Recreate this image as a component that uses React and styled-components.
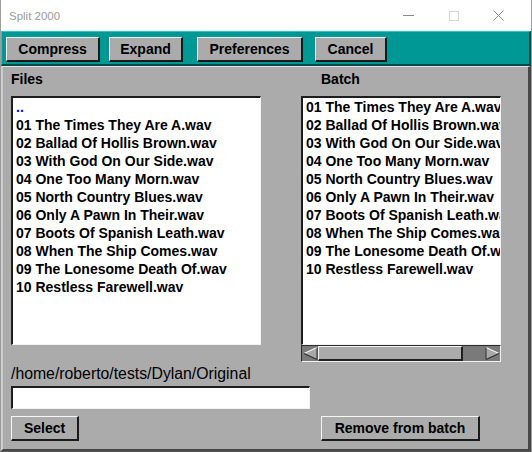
import styled, { createGlobalStyle } from 'styled-components';

const GlobalStyle = createGlobalStyle`
  html, body {
    margin: 0;
    padding: 0;
    background: #fff;
  }
  body {
    font-family: "Liberation Sans", Arial, sans-serif;
  }
`;

const FILES = [
  '01 The Times They Are A.wav',
  '02 Ballad Of Hollis Brown.wav',
  '03 With God On Our Side.wav',
  '04 One Too Many Morn.wav',
  '05 North Country Blues.wav',
  '06 Only A Pawn In Their.wav',
  '07 Boots Of Spanish Leath.wav',
  '08 When The Ship Comes.wav',
  '09 The Lonesome Death Of.wav',
  '10 Restless Farewell.wav',
];

const Window = styled.div`
  width: 532px;
  height: 452px;
  box-sizing: border-box;
  display: flex;
  flex-direction: column;
  background: #fff;
  border-left: 1px solid #9c9c9c;
  border-right: 1px solid #9c9c9c;
  border-bottom: 1px solid #5a5a5a;
`;

const TitleBar = styled.div`
  height: 31px;
  flex-shrink: 0;
  display: flex;
  align-items: center;
  background: #fff;
`;

const Title = styled.span`
  flex: 1;
  padding-left: 8px;
  font-family: "Liberation Sans", Arial, sans-serif;
  font-size: 11.5px;
  color: #9a9a9a;
`;

const Controls = styled.div`
  display: flex;
  padding-right: 10px;
`;

const ControlBox = styled.div`
  width: 45px;
  height: 31px;
  display: flex;
  align-items: center;
  justify-content: center;
`;

const Toolbar = styled.div`
  height: 35px;
  flex-shrink: 0;
  box-sizing: border-box;
  display: flex;
  align-items: flex-start;
  padding: 5px 0 0 4px;
  background: #009894;
  border-style: solid;
  border-width: 1px 2px 2px 1px;
  border-color: #1ecbc8 #004a47 #004a47 #1ecbc8;
`;

const Button = styled.button`
  width: ${p => p.$w}px;
  height: 25px;
  margin-left: ${p => p.$ml || 0}px;
  padding: 0;
  box-sizing: border-box;
  background: #ababab;
  border-style: solid;
  border-width: 1px 2px 2px 1px;
  border-color: #f6f6f6 #1a1a1a #1a1a1a #f6f6f6;
  font-family: "Liberation Sans", Arial, sans-serif;
  font-weight: bold;
  font-size: 14px;
  line-height: 20px;
  color: #000;
  text-align: center;
`;

const Main = styled.div`
  flex: 1;
  box-sizing: border-box;
  background: #ababab;
  border-style: solid;
  border-width: 1px 3px 2px 2px;
  border-color: #e2e2e2 #474747 #474747 #cdcdcd;
  padding: 4px 0 0 8px;
`;

const Panes = styled.div`
  display: grid;
  grid-template-columns: 250px 200px;
  grid-template-rows: 16px auto;
  column-gap: 40px;
  row-gap: 9px;
  align-items: start;
`;

const Label = styled.div`
  padding-left: ${p => p.$indent || 0}px;
  font-weight: bold;
  font-size: 14px;
  line-height: 16px;
  color: #000;
`;

const Sunken = styled.div`
  box-sizing: border-box;
  background: #fff;
  border-style: solid;
  border-width: 2px 1px 1px 2px;
  border-color: #1e1e1e #f2f2f2 #f2f2f2 #1e1e1e;
`;

const List = styled(Sunken)`
  height: 249px;
  padding: 0 0 0 3px;
  overflow: hidden;
`;

const Row = styled.div`
  font-weight: bold;
  font-size: 14px;
  line-height: 18px;
  white-space: nowrap;
  color: ${p => (p.$dir ? '#0000ff' : '#000')};
`;

const BatchBox = styled.div`
  display: flex;
  flex-direction: column;
  height: 266px;
`;

const HScroll = styled.div`
  height: 17px;
  box-sizing: border-box;
  display: flex;
  background: #7a7a7a;
  border-style: solid;
  border-width: 1px;
  border-color: #2a2a2a #f2f2f2 #f2f2f2 #2a2a2a;
  padding-left: 1px;
`;

const Arrow = styled.svg`
  width: 15px;
  height: 15px;
  flex-shrink: 0;
`;

const Thumb = styled.div`
  width: ${p => p.$w}px;
  box-sizing: border-box;
  background: #ababab;
  border-style: solid;
  border-width: 1px 2px 2px 1px;
  border-color: #f4f4f4 #202020 #202020 #f4f4f4;
`;

const Trough = styled.div`
  flex: 1;
`;

const PathLabel = styled.div`
  margin-top: 3px;
  font-size: 15.8px;
  line-height: 18px;
  color: #000;
`;

const PathInput = styled.input`
  display: block;
  width: 299px;
  height: 23px;
  margin: 3px 0 0;
  padding: 0 3px;
  box-sizing: border-box;
  background: #fff;
  border-style: solid;
  border-width: 2px 1px 1px 2px;
  border-color: #1e1e1e #f2f2f2 #f2f2f2 #1e1e1e;
  outline: none;
  font-family: "Liberation Sans", Arial, sans-serif;
  font-size: 14px;
`;

const ButtonRow = styled.div`
  display: grid;
  grid-template-columns: 250px 200px;
  column-gap: 40px;
  margin-top: 7px;
`;

function ScrollArrow({ right }) {
  return (
    <Arrow viewBox="0 0 15 15" style={right ? { transform: 'scaleX(-1)' } : undefined}>
      <polygon points="1,7.5 14,1.5 14,13.5" fill="#a8a8a8" />
      <line x1="1" y1="7.5" x2="14" y2="1.5" stroke="#f4f4f4" strokeWidth="1.2" />
      <line x1="1" y1="7.5" x2="14" y2="13.5" stroke="#303030" strokeWidth="1.2" />
      <line x1="14" y1="1.5" x2="14" y2="13.5" stroke="#303030" strokeWidth="1" />
    </Arrow>
  );
}

export default function App() {
  return (
    <>
      <GlobalStyle />
      <Window>
        <TitleBar>
          <Title>Split 2000</Title>
          <Controls>
            <ControlBox>
              <svg width="11" height="11" viewBox="0 0 11 11">
                <line x1="0" y1="5.5" x2="11" y2="5.5" stroke="#8a8a8a" strokeWidth="1" />
              </svg>
            </ControlBox>
            <ControlBox>
              <svg width="10" height="10" viewBox="0 0 10 10">
                <rect x="0.5" y="0.5" width="9" height="9" fill="none" stroke="#d4d4d4" strokeWidth="1" />
              </svg>
            </ControlBox>
            <ControlBox>
              <svg width="11" height="11" viewBox="0 0 11 11">
                <path d="M0.5 0.5 L10.5 10.5 M10.5 0.5 L0.5 10.5" stroke="#8a8a8a" strokeWidth="1" fill="none" />
              </svg>
            </ControlBox>
          </Controls>
        </TitleBar>

        <Toolbar>
          <Button $w={94}>Compress</Button>
          <Button $w={74} $ml={9}>Expand</Button>
          <Button $w={106} $ml={14}>Preferences</Button>
          <Button $w={72} $ml={12}>Cancel</Button>
        </Toolbar>

        <Main>
          <Panes>
            <Label>Files</Label>
            <Label $indent={20}>Batch</Label>

            <List>
              <Row $dir>..</Row>
              {FILES.map(f => <Row key={f}>{f}</Row>)}
            </List>

            <BatchBox>
              <List>
                {FILES.map(f => <Row key={f}>{f}</Row>)}
              </List>
              <HScroll>
                <ScrollArrow />
                <Thumb $w={145} />
                <Trough />
                <ScrollArrow right />
              </HScroll>
            </BatchBox>
          </Panes>

          <PathLabel>/home/roberto/tests/Dylan/Original</PathLabel>
          <PathInput type="text" defaultValue="" />

          <ButtonRow>
            <div><Button $w={68}>Select</Button></div>
            <div><Button $w={159} $ml={20}>Remove from batch</Button></div>
          </ButtonRow>
        </Main>
      </Window>
    </>
  );
}
